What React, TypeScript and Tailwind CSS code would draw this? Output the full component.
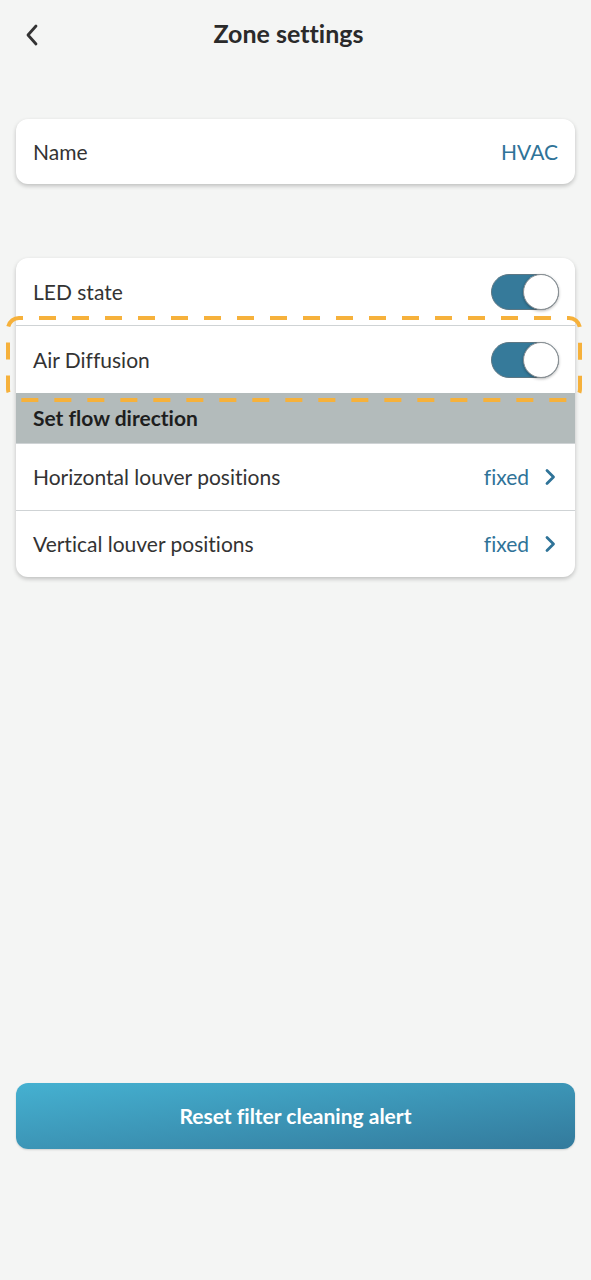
import React from "react";

function Toggle() {
  return (
    <div className="relative w-[68px] h-[36px] rounded-full bg-[#367a9a] border border-[#5d7784]">
      <div className="absolute right-[-1px] top-[-1px] w-[36px] h-[36px] rounded-full bg-white border border-[#8a8f93] shadow-[0_1px_3px_rgba(0,0,0,0.3)]" />
    </div>
  );
}

function Chevron() {
  return (
    <svg width="12" height="18" viewBox="0 0 12 18" className="ml-[15px]">
      <path d="M3 2.5 L9.5 9 L3 15.5" fill="none" stroke="#2f7398" strokeWidth="2.8" strokeLinecap="round" strokeLinejoin="round" />
    </svg>
  );
}

export default function App() {
  return (
    <div
      className="w-[591px] h-[1280px] bg-[#f4f5f4] flex flex-col text-[#333] overflow-hidden [font-variant-ligatures:none]"
      style={{ fontFamily: "Lato, 'Noto Sans', sans-serif" }}
    >
      <div className="relative h-[70px] flex items-center justify-center">
        <svg width="20" height="24" viewBox="0 0 20 24" className="absolute left-[22px] top-[23px]">
          <path d="M14 3 L6 12 L14 21" fill="none" stroke="#333" strokeWidth="2.8" strokeLinecap="round" strokeLinejoin="round" />
        </svg>
        <div className="text-[25px] font-bold text-[#2a2a2a] mt-[-2px] mr-[14px]">Zone settings</div>
      </div>

      <div className="mx-[16px] mt-[49px] h-[65px] bg-white rounded-[12px] shadow-[0_2px_4px_rgba(0,0,0,0.22)] flex items-center justify-between px-[17px] text-[21px]">
        <span>Name</span>
        <span className="text-[#2f7398]">HVAC</span>
      </div>

      <div className="relative mx-[16px] mt-[74px] bg-white rounded-[12px] shadow-[0_2px_4px_rgba(0,0,0,0.22)] flex flex-col text-[21px]">
        <div className="h-[68px] flex items-center justify-between pl-[17px] pr-[16px] border-b border-[#cfd3d5]">
          <span>LED state</span>
          <Toggle />
        </div>
        <div className="h-[67px] flex items-center justify-between pl-[17px] pr-[16px]">
          <span>Air Diffusion</span>
          <Toggle />
        </div>
        <div className="h-[51px] flex items-center px-[17px] bg-[#b3bbbb] font-bold text-[#1e1e1e] border-b border-[#cfd3d5]">
          Set flow direction
        </div>
        <div className="h-[67px] flex items-center justify-between pl-[17px] pr-[19px] border-b border-[#cfd3d5]">
          <span>Horizontal louver positions</span>
          <span className="flex items-center text-[#2f7398]">fixed<Chevron /></span>
        </div>
        <div className="h-[66px] flex items-center justify-between pl-[17px] pr-[19px]">
          <span>Vertical louver positions</span>
          <span className="flex items-center text-[#2f7398]">fixed<Chevron /></span>
        </div>

        <svg className="absolute left-[-10px] top-[58px]" width="576" height="86" viewBox="0 0 576 86">
          <rect x="2" y="2" width="572" height="82" rx="11" fill="none" stroke="#f6b13b" strokeWidth="4" strokeDasharray="17 16" strokeDashoffset="13" />
        </svg>
      </div>

      <div className="mx-[16px] mt-[506px] h-[66px] rounded-[12px] bg-gradient-to-br from-[#45b1d1] to-[#337a9c] flex items-center justify-center text-white font-bold text-[21px] shadow-[0_1px_2px_rgba(0,0,0,0.15)]">
        Reset filter cleaning alert
      </div>
    </div>
  );
}
